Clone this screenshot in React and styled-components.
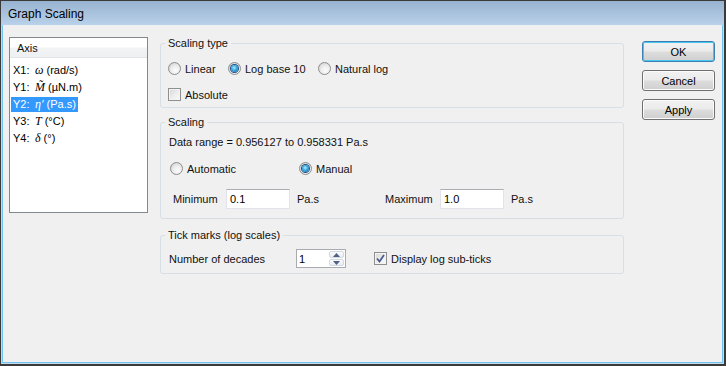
import styled, { createGlobalStyle } from "styled-components";

const GlobalStyle = createGlobalStyle`
  html, body {
    margin: 0;
    padding: 0;
    background: #f0f0f0;
  }
  body {
    font-family: "Liberation Sans", Arial, sans-serif;
    font-size: 11px;
    color: #111;
  }
`;

const Window = styled.div`
  box-sizing: border-box;
  width: 726px;
  height: 366px;
  display: flex;
  flex-direction: column;
  border: 1px solid #3a3a3a;
  border-right-width: 2px;
  border-bottom-width: 2px;
  background: #c6daef;
`;

const TitleBar = styled.div`
  flex: none;
  height: 24px;
  padding: 1px 0 0 7px;
  box-sizing: border-box;
  display: flex;
  align-items: center;
  background: linear-gradient(#98b3d0, #b9d1ea);
  font-size: 12px;
  color: #000;
`;

const Body = styled.div`
  flex: 1;
  display: flex;
  align-items: flex-start;
  margin: 0 1px 1px 1px;
  padding: 12px 0 0 6px;
  border: 1px solid #6fc3ec;
  border-top: none;
  background: #f0f0f0;
`;

/* axis list */
const ListBox = styled.div`
  box-sizing: border-box;
  flex: none;
  width: 139px;
  height: 176px;
  border: 1px solid #828790;
  background: #fff;
`;

const ListHeader = styled.div`
  height: 19px;
  padding-left: 7px;
  display: flex;
  align-items: center;
  background: linear-gradient(#ffffff 0%, #ffffff 45%, #f2f3f5 55%, #eef0f2 100%);
  border-bottom: 1px solid #e2e4e7;
`;

const ListItems = styled.div`
  display: flex;
  flex-direction: column;
  padding: 4px 0 0 1px;
`;

const Item = styled.div`
  height: 17px;
  display: flex;
  align-items: center;
`;

const ItemText = styled.span`
  display: flex;
  align-items: center;
  padding: 1px 2px;
  line-height: 13px;
  background: ${(p) => (p.$selected ? "#3399ff" : "transparent")};
  color: ${(p) => (p.$selected ? "#fff" : "#000")};
`;

const Key = styled.span`
  width: 22px;
`;

const Sym = styled.span`
  font-family: "Liberation Serif", "Times New Roman", serif;
  font-style: italic;
  font-size: 12px;
  margin-right: 3px;
`;

/* group boxes */
const Groups = styled.div`
  flex: none;
  width: 464px;
  margin-left: 12px;
  display: flex;
  flex-direction: column;
`;

const Group = styled.fieldset`
  box-sizing: border-box;
  min-width: 0;
  height: ${(p) => p.$h}px;
  margin: ${(p) => p.$mt || 0}px 0 0 0;
  padding: 0 0 0 7px;
  border: 1px solid #d5dfe5;
  border-radius: 3px;
`;

const Legend = styled.legend`
  margin-left: -3px;
  padding: 0 3px;
  line-height: 13px;
  color: #111;
`;

const Row = styled.div`
  display: flex;
  align-items: center;
  height: ${(p) => p.$h || 17}px;
  margin-top: ${(p) => p.$mt || 0}px;
  margin-left: ${(p) => p.$ml || 0}px;
`;

const Option = styled.label`
  display: flex;
  align-items: center;
  gap: 4px;
  width: ${(p) => (p.$w ? `${p.$w}px` : "auto")};
  flex: none;
`;

const RadioCircle = styled.span`
  box-sizing: border-box;
  flex: none;
  width: 13px;
  height: 13px;
  border-radius: 50%;
  border: 1px solid #8d8d8d;
  background: radial-gradient(circle at 60% 65%, #fdfdfd 0%, #ececec 45%, #c9c9c9 100%);
  display: flex;
  align-items: center;
  justify-content: center;

  &::after {
    content: "";
    display: ${(p) => (p.$checked ? "block" : "none")};
    width: 7px;
    height: 7px;
    border-radius: 50%;
    background: radial-gradient(circle at 45% 40%, #b8eeff 0%, #42aee6 40%, #0c5a9c 100%);
    box-shadow: 0 0 0 1px #1d4e7e;
  }
`;

const CheckBox = styled.span`
  box-sizing: border-box;
  flex: none;
  width: 13px;
  height: 13px;
  border: 1px solid #8e8f8f;
  background: linear-gradient(135deg, #d6d6d6 0%, #ececec 50%, #fafafa 100%);
  box-shadow: inset 0 0 0 1px #f4f4f4;
  display: flex;
  align-items: center;
  justify-content: center;
`;

const Text = styled.span`
  width: ${(p) => (p.$w ? `${p.$w}px` : "auto")};
  flex: none;
  white-space: nowrap;
`;

const TextBox = styled.div`
  box-sizing: border-box;
  flex: none;
  width: ${(p) => p.$w}px;
  height: ${(p) => p.$h || 20}px;
  padding-left: 3px;
  display: flex;
  align-items: center;
  background: #fff;
  border: 1px solid #e2e3ea;
  border-top-color: #abadb3;
  color: #000;
`;

const Spinner = styled.div`
  box-sizing: border-box;
  flex: none;
  width: 50px;
  height: 19px;
  display: flex;
  background: #fff;
  border: 1px solid #a9abb0;
`;

const SpinValue = styled.span`
  flex: 1;
  padding-left: 2px;
  display: flex;
  align-items: center;
  color: #000;
`;

const SpinButtons = styled.div`
  width: 15px;
  display: flex;
  flex-direction: column;
  padding: 1px 1px 1px 0;
  gap: 1px;
`;

const SpinButton = styled.span`
  flex: 1;
  display: flex;
  align-items: center;
  justify-content: center;
  border: 1px solid #d3d9e2;
  border-radius: 2px;
  background: linear-gradient(#fbfbfc, #e9ecf0);
`;

/* buttons */
const ButtonColumn = styled.div`
  flex: none;
  margin: 4px 0 0 18px;
  display: flex;
  flex-direction: column;
  gap: 8px;
`;

const Button = styled.button`
  box-sizing: border-box;
  width: 73px;
  height: 21px;
  padding: 0;
  font: inherit;
  font-size: 11px;
  color: #000;
  border: 1px solid ${(p) => (p.$default ? "#3c7fb1" : "#707070")};
  border-radius: 3px;
  background: linear-gradient(#f2f2f2 0%, #ebebeb 48%, #dddddd 52%, #cfcfcf 100%);
  box-shadow: inset 0 0 0 1px ${(p) => (p.$default ? "#48c8f0" : "#fbfbfb")};
`;

const Radio = ({ checked, w, children }) => (
  <Option $w={w}>
    <RadioCircle $checked={checked} />
    {children}
  </Option>
);

const Check = ({ checked, children }) => (
  <Option>
    <CheckBox>
      {checked && (
        <svg width="9" height="9" viewBox="0 0 9 9">
          <path d="M1 4.5 L3.5 7.5 L8 1" fill="none" stroke="#4a5d8f" strokeWidth="1.8" />
        </svg>
      )}
    </CheckBox>
    {children}
  </Option>
);

const Arrow = ({ up }) => (
  <svg width="7" height="4" viewBox="0 0 7 4">
    <path d={up ? "M0 4 L3.5 0 L7 4 Z" : "M0 0 L3.5 4 L7 0 Z"} fill="#4d6185" />
  </svg>
);

const axes = [
  { key: "X1:", sym: "ω", unit: "(rad/s)" },
  { key: "Y1:", sym: "M\u0303", unit: "(µN.m)" },
  { key: "Y2:", sym: "η′", unit: "(Pa.s)", selected: true },
  { key: "Y3:", sym: "T", unit: "(°C)" },
  { key: "Y4:", sym: "δ", unit: "(°)" },
];

export default function App() {
  return (
    <>
      <GlobalStyle />
      <Window>
        <TitleBar>Graph Scaling</TitleBar>
        <Body>
          <ListBox>
            <ListHeader>Axis</ListHeader>
            <ListItems>
              {axes.map((a) => (
                <Item key={a.key}>
                  <ItemText $selected={a.selected}>
                    <Key>{a.key}</Key>
                    <Sym>{a.sym}</Sym>
                    {a.unit}
                  </ItemText>
                </Item>
              ))}
            </ListItems>
          </ListBox>

          <Groups>
            <Group $h={71}>
              <Legend>Scaling type</Legend>
              <Row $mt={10}>
                <Radio w={60}>Linear</Radio>
                <Radio w={90} checked>Log base 10</Radio>
                <Radio>Natural log</Radio>
              </Row>
              <Row $mt={9}>
                <Check>Absolute</Check>
              </Row>
            </Group>

            <Group $h={103} $mt={8}>
              <Legend>Scaling</Legend>
              <Row $mt={4} $ml={1}>
                <Text>Data range = 0.956127 to 0.958331 Pa.s</Text>
              </Row>
              <Row $mt={10} $ml={2}>
                <Radio w={129}>Automatic</Radio>
                <Radio checked>Manual</Radio>
              </Row>
              <Row $mt={12} $ml={5} $h={20}>
                <Text $w={53}>Minimum</Text>
                <TextBox $w={64}>0.1</TextBox>
                <Text $w={88} style={{ marginLeft: 7 }}>Pa.s</Text>
                <Text $w={55}>Maximum</Text>
                <TextBox $w={64}>1.0</TextBox>
                <Text style={{ marginLeft: 7 }}>Pa.s</Text>
              </Row>
            </Group>

            <Group $h={45} $mt={10}>
              <Legend>Tick marks (log scales)</Legend>
              <Row $mt={7} $ml={1} $h={19}>
                <Text $w={127}>Number of decades</Text>
                <Spinner>
                  <SpinValue>1</SpinValue>
                  <SpinButtons>
                    <SpinButton><Arrow up /></SpinButton>
                    <SpinButton><Arrow /></SpinButton>
                  </SpinButtons>
                </Spinner>
                <span style={{ width: 28 }} />
                <Check checked>Display log sub-ticks</Check>
              </Row>
            </Group>
          </Groups>

          <ButtonColumn>
            <Button $default>OK</Button>
            <Button>Cancel</Button>
            <Button>Apply</Button>
          </ButtonColumn>
        </Body>
      </Window>
    </>
  );
}
